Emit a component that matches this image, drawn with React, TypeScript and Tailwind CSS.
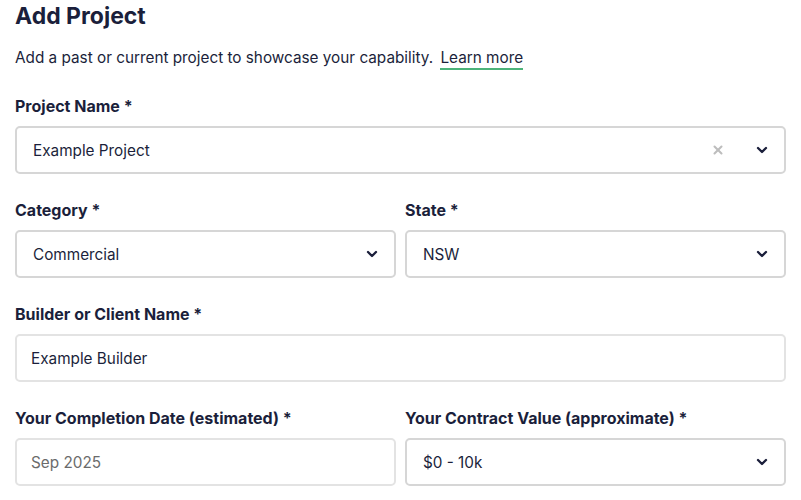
import { ChevronDown, X } from "lucide-react";

function Label({ children }: { children: React.ReactNode }) {
  return (
    <div className="mb-[10px] text-[16px] font-bold leading-5 text-[#1b1f3b]">
      {children}
    </div>
  );
}

function SelectBox({ value, clearable }: { value: string; clearable?: boolean }) {
  return (
    <div className="flex h-[48px] items-center rounded-[5px] border-2 border-[#d6d6d6] bg-white pl-4 pr-[14px]">
      <span className="flex-1 pt-[2px] text-[15.3px] leading-5 text-[#1b1f3b]">{value}</span>
      {clearable && (
        <X className="mr-[29px] h-[14px] w-[14px] text-[#bdbdbd]" strokeWidth={3.5} />
      )}
      <ChevronDown className="h-[16px] w-[16px] text-[#1b1f3b]" strokeWidth={3.5} />
    </div>
  );
}

function TextBox({ value, muted }: { value: string; muted?: boolean }) {
  return (
    <div className="flex h-[48px] items-center rounded-[5px] border-2 border-[#e3e3e3] bg-white px-[14px]">
      <span
        className={`pt-[2px] text-[15.3px] leading-5 ${muted ? "text-[#6b6b6b]" : "text-[#1b1f3b]"}`}
      >
        {value}
      </span>
    </div>
  );
}

export default function App() {
  return (
    <div
      className="min-h-screen bg-white px-[15px] text-[#1b1f3b]"
      style={{ fontFamily: "Inter, 'Noto Sans', sans-serif" }}
    >
      <h1 className="pt-[2px] text-[23px] font-bold leading-7">Add Project</h1>

      <p className="mt-[18px] text-[15.3px] leading-5">
        Add a past or current project to showcase your capability.{" "}
        <a className="ml-[3px] border-b-2 border-[#4cb37a] pb-[1px] text-[#1b1f3b]">
          Learn more
        </a>
      </p>

      <div className="mt-[28px]">
        <Label>Project Name *</Label>
        <SelectBox value="Example Project" clearable />
      </div>

      <div className="mt-[26px] grid grid-cols-2 gap-[9px]">
        <div>
          <Label>Category *</Label>
          <SelectBox value="Commercial" />
        </div>
        <div>
          <Label>State *</Label>
          <SelectBox value="NSW" />
        </div>
      </div>

      <div className="mt-[26px]">
        <Label>Builder or Client Name *</Label>
        <TextBox value="Example Builder" />
      </div>

      <div className="mt-[26px] grid grid-cols-2 gap-[9px]">
        <div>
          <Label>Your Completion Date (estimated) *</Label>
          <TextBox value="Sep 2025" muted />
        </div>
        <div>
          <Label>Your Contract Value (approximate) *</Label>
          <SelectBox value="$0 - 10k" />
        </div>
      </div>
    </div>
  );
}
